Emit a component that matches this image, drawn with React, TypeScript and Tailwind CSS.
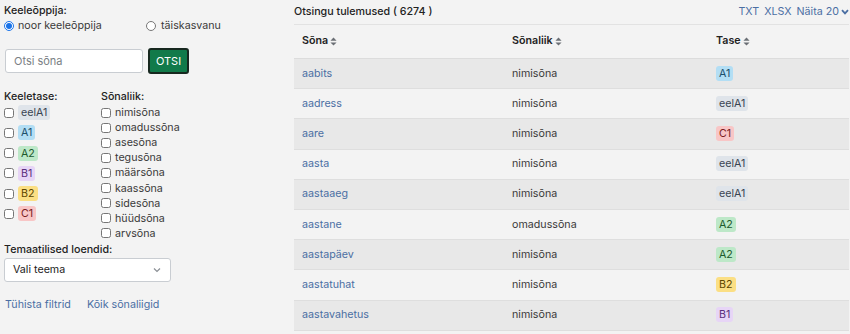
import React from 'react';

const levelStyles: Record<string, string> = {
  eelA1: 'bg-[#dfe4ea] text-[#3a4452]',
  A1: 'bg-[#b3def4] text-[#1d4f6b]',
  A2: 'bg-[#bde8c8] text-[#1d5a2e]',
  B1: 'bg-[#e7d5f6] text-[#5a2d7c]',
  B2: 'bg-[#fbdf84] text-[#5e4700]',
  C1: 'bg-[#f8c6c6] text-[#7a1d1d]',
};

const levels = ['eelA1', 'A1', 'A2', 'B1', 'B2', 'C1'];
const wordTypes = ['nimisõna', 'omadussõna', 'asesõna', 'tegusõna', 'määrsõna', 'kaassõna', 'sidesõna', 'hüüdsõna', 'arvsõna'];

const rows = [
  { word: 'aabits', type: 'nimisõna', level: 'A1' },
  { word: 'aadress', type: 'nimisõna', level: 'eelA1' },
  { word: 'aare', type: 'nimisõna', level: 'C1' },
  { word: 'aasta', type: 'nimisõna', level: 'eelA1' },
  { word: 'aastaaeg', type: 'nimisõna', level: 'eelA1' },
  { word: 'aastane', type: 'omadussõna', level: 'A2' },
  { word: 'aastapäev', type: 'nimisõna', level: 'A2' },
  { word: 'aastatuhat', type: 'nimisõna', level: 'B2' },
  { word: 'aastavahetus', type: 'nimisõna', level: 'B1' },
];

function Badge({ level }: { level: string }) {
  return <span className={`rounded-[3px] px-[3px] py-[1px] leading-[13px] ${levelStyles[level]}`}>{level}</span>;
}

function SortIcon() {
  return (
    <svg width="7" height="9" viewBox="0 0 8 10" className="ml-[2px] inline-block">
      <path d="M4 0.5 L7.5 4 H0.5 Z" fill="#6b6f75" />
      <path d="M4 9.5 L7.5 6 H0.5 Z" fill="#6b6f75" />
    </svg>
  );
}

function Sidebar() {
  return (
    <aside className="w-[294px] shrink-0 pl-[4px] pt-[2px] text-[#3a3a3a]">
      <div className="font-medium leading-[15px] text-[#222]">Keeleõppija:</div>
      <div className="flex items-center leading-[15px]">
        <label className="flex w-[142px] items-center gap-[4px]">
          <input type="radio" name="learner" defaultChecked className="m-0 h-[10px] w-[10px] accent-[#1a73e8]" />
          noor keeleõppija
        </label>
        <label className="flex items-center gap-[5px]">
          <input type="radio" name="learner" className="m-0 h-[10px] w-[10px]" />
          täiskasvanu
        </label>
      </div>

      <div className="mt-[15px] flex items-center gap-[5px] pl-[1px]">
        <input
          placeholder="Otsi sõna"
          className="h-[24px] w-[138px] rounded-[3px] border border-[#c9cdd2] bg-white px-[8px] text-[11px] placeholder:text-[#7a7f85] outline-none"
        />
        <button className="h-[26px] w-[41px] rounded-[3px] border-2 border-[#17281f] bg-[#117a4a] text-[11px] text-white">OTSI</button>
      </div>

      <div className="mt-[15px] flex">
        <div className="w-[97px]">
          <div className="font-medium leading-[16px] text-[#222]">Keeletase:</div>
          <div className="flex flex-col gap-[5.3px]">
            {levels.map((l) => (
              <label key={l} className="flex h-[15px] items-center gap-[4px]">
                <input type="checkbox" className="m-0 h-[10px] w-[10px]" />
                <Badge level={l} />
              </label>
            ))}
          </div>
        </div>
        <div>
          <div className="font-medium leading-[16px] text-[#222]">Sõnaliik:</div>
          {wordTypes.map((t) => (
            <label key={t} className="flex h-[15.1px] items-center gap-[4px] leading-[15px]">
              <input type="checkbox" className="m-0 h-[10px] w-[10px]" />
              {t}
            </label>
          ))}
        </div>
      </div>

      <div className="mt-[1px] font-medium leading-[16px] text-[#222]">Temaatilised loendid:</div>
      <div className="flex h-[24px] w-[167px] items-center justify-between rounded-[3px] border border-[#c9cdd2] bg-white pl-[8px] pr-[9px] text-[#222]">
        <span>Vali teema</span>
        <svg width="8" height="6" viewBox="0 0 8 6">
          <path d="M1 1.5 L4 4.5 L7 1.5" stroke="#8a8f95" strokeWidth="1.2" fill="none" />
        </svg>
      </div>

      <div className="mt-[15px] flex gap-[16px] pl-[1px] text-[#4b6fa3]">
        <span>Tühista filtrid</span>
        <span>Kõik sõnaliigid</span>
      </div>
    </aside>
  );
}

function Results() {
  return (
    <main className="flex-1 pr-[1px] text-[#3a3a3a]">
      <div className="flex h-[24px] items-center justify-between border-b border-[#e2e2e2] pb-[1px]">
        <span className="font-medium text-[#222]">Otsingu tulemused ( 6274 )</span>
        <span className="flex items-center gap-[5px] text-[#4b6fa3]">
          <span>TXT</span>
          <span>XLSX</span>
          <span className="flex items-center gap-[2px]">
            Näita 20
            <svg width="8" height="6" viewBox="0 0 8 6">
              <path d="M1 1.2 L4 4.4 L7 1.2" stroke="#4b6fa3" strokeWidth="1.8" fill="none" />
            </svg>
          </span>
        </span>
      </div>
      <div className="grid h-[34px] grid-cols-[210px_204px_1fr] items-center border-b border-[#dcdcdc] pl-[8px] font-semibold text-[#222]">
        <span className="flex items-center">Sõna<SortIcon /></span>
        <span className="flex items-center">Sõnaliik<SortIcon /></span>
        <span className="flex items-center">Tase<SortIcon /></span>
      </div>
      {rows.map((r, i) => (
        <div
          key={r.word}
          className={`grid h-[30.2px] grid-cols-[210px_204px_1fr] items-center border-b border-[#dedede] pl-[8px] ${i % 2 === 0 ? 'bg-[#e8e8e8]' : ''}`}
        >
          <span className="text-[#4b6fa3]">{r.word}</span>
          <span>{r.type}</span>
          <span><Badge level={r.level} /></span>
        </div>
      ))}
    </main>
  );
}

export default function App() {
  return (
    <div
      className="flex h-[334px] w-[850px] overflow-hidden bg-[#f3f3f3] pt-[1px] text-[10.7px]"
      style={{ fontFamily: 'Inter, "Noto Sans", sans-serif' }}
    >
      <Sidebar />
      <Results />
    </div>
  );
}
